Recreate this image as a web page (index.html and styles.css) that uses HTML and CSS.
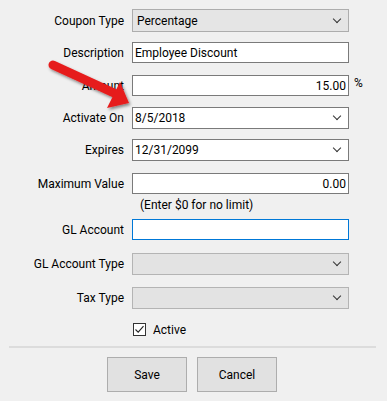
FILE: index.html
```html
<!DOCTYPE html>
<html>
<head>
    <meta charset="utf-8">
    <title>Coupon</title>
    <link rel="stylesheet" href="styles.css">
</head>
<body>
    <div class="dialog">
        <div class="row r-type">
            <label>Coupon Type</label>
            <div class="combo">Percentage<span class="chev"></span></div>
        </div>
        <div class="row r-desc">
            <label>Description</label>
            <div class="text">Employee Discount</div>
        </div>
        <div class="row r-amount">
            <label>Amount</label>
            <div class="text num">15.00</div>
            <span class="unit">%</span>
        </div>
        <div class="row r-activate">
            <label>Activate On</label>
            <div class="date">8/5/2018<span class="chev"></span></div>
        </div>
        <div class="row r-expires">
            <label>Expires</label>
            <div class="date">12/31/2099<span class="chev"></span></div>
        </div>
        <div class="row r-max">
            <label>Maximum Value</label>
            <div class="text num">0.00</div>
        </div>
        <div class="hint">(Enter $0 for no limit)</div>
        <div class="row r-gl">
            <label>GL Account</label>
            <div class="text focus"></div>
        </div>
        <div class="row r-gltype">
            <label>GL Account Type</label>
            <div class="combo off"><span class="chev"></span></div>
        </div>
        <div class="row r-tax">
            <label>Tax Type</label>
            <div class="combo off"><span class="chev"></span></div>
        </div>
        <div class="check">
            <span class="box">
                <svg width="11" height="11" viewBox="0 0 11 11"><path d="M1.5 5.5 L4.2 8.2 L9.5 2.2" fill="none" stroke="#222" stroke-width="1.1"/></svg>
            </span>
            <span>Active</span>
        </div>
        <div class="sep"></div>
        <div class="buttons">
            <button>Save</button>
            <button>Cancel</button>
        </div>

        <!-- annotation arrow over the form -->
        <svg class="arrow" width="100" height="70" viewBox="0 0 100 70">
            <defs>
                <filter id="shade" x="-20%" y="-20%" width="150%" height="150%">
                    <feDropShadow dx="1.5" dy="2" stdDeviation="1.5" flood-color="#000" flood-opacity="0.45"/>
                </filter>
            </defs>
            <g filter="url(#shade)">
                <line x1="13" y1="15" x2="74" y2="43" stroke="#e61c1c" stroke-width="9" stroke-linecap="round"/>
                <polygon points="89,53 67,58 80,32" fill="#e61c1c"/>
            </g>
        </svg>
    </div>
</body>
</html>
```
FILE: styles.css
```css
* {
    margin: 0;
    padding: 0;
    box-sizing: border-box;
}
body {
    background: #f0f0f0;
    font-family: Roboto, sans-serif;
    font-size: 12px;
    color: #000;
}
.dialog {
    position: relative;
    width: 387px;
    height: 401px;
    padding-top: 9px;
}
.row {
    display: grid;
    grid-template-columns: 124px 217px auto;
    column-gap: 8px;
    align-items: center;
}
.row label {
    text-align: right;
    line-height: 14px;
}
.r-desc { margin-top: 10px; }
.r-amount { margin-top: 12px; }
.r-activate { margin-top: 11px; }
.r-expires { margin-top: 10px; }
.r-max { margin-top: 12px; }
.r-gl { margin-top: 7px; }
.r-gltype { margin-top: 13px; }
.r-tax { margin-top: 12px; }

.combo, .date, .text {
    position: relative;
    display: flex;
    align-items: center;
    white-space: nowrap;
}
.combo {
    height: 23px;
    background: #e5e5e5;
    border: 1px solid #adadad;
    padding-left: 4px;
}
.combo.off {
    height: 22px;
    background: #e3e3e3;
    border-color: #b4b4b4;
}
.date {
    height: 22px;
    background: #fff;
    border: 1px solid #7a7a7a;
    padding-left: 2px;
}
.text {
    height: 21px;
    background: #fff;
    border: 1px solid #7a7a7a;
    padding: 0 2px;
}
.text.num {
    justify-content: flex-end;
}
.text.focus {
    border-color: #0078d7;
}
.chev {
    position: absolute;
    right: 8px;
    top: 50%;
    width: 6px;
    height: 6px;
    margin-top: -5px;
    border-right: 1.3px solid #333;
    border-bottom: 1.3px solid #333;
    transform: rotate(45deg);
}
.unit {
    margin-top: -6px;
    margin-left: -3px;
}
.hint {
    margin: 4px 0 0 140px;
    line-height: 14px;
}
.check {
    display: flex;
    align-items: center;
    gap: 7px;
    margin: 14px 0 0 133px;
    height: 13px;
}
.check .box {
    width: 13px;
    height: 13px;
    border: 1px solid #333;
    background: #fff;
    display: flex;
    align-items: center;
    justify-content: center;
}
.sep {
    height: 2px;
    background: #dcdcdc;
    margin: 10px 11px 0 9px;
}
.buttons {
    display: flex;
    gap: 10px;
    margin: 9px 0 0 107px;
}
.buttons button {
    width: 80px;
    height: 35px;
    background: #e1e1e1;
    border: 1px solid #adadad;
    font-family: Roboto, sans-serif;
    font-size: 12px;
    color: #000;
}
.arrow {
    position: absolute;
    left: 40px;
    top: 50px;
}
```
